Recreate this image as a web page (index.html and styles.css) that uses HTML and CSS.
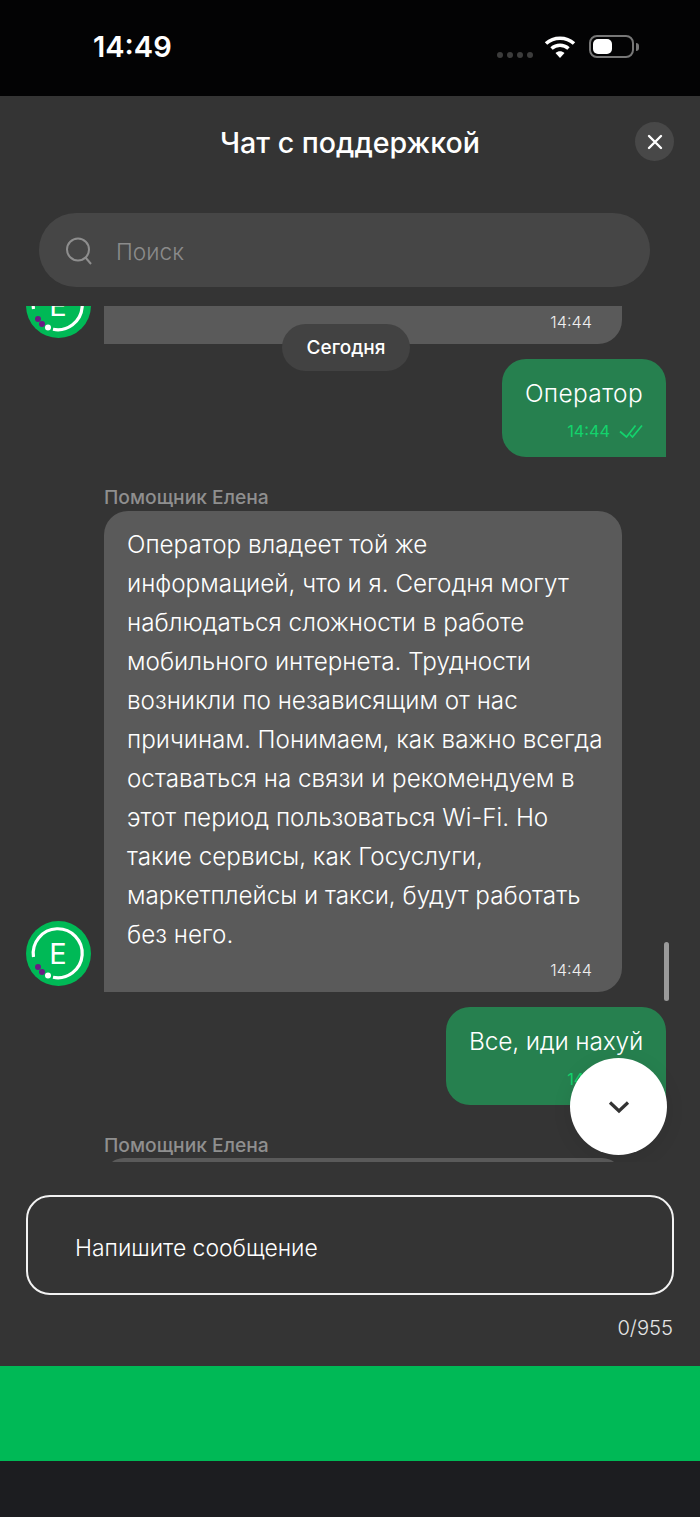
FILE: index.html
```html
<!DOCTYPE html>
<html>
	<head>
		<title>Чат с поддержкой</title>
		<link rel="stylesheet" href="styles.css">
	</head>
	<body>
		<div class="status-bar">
			<span class="clock">14:49</span>
			<div class="status-icons">
				<div class="signal"><i></i><i></i><i></i><i></i></div>
				<svg class="wifi" width="32" height="24" viewBox="0 0 32 24">
					<path d="M2 8.500C9.800 1.500 22.200 1.500 30 8.500" fill="none" stroke="#fff" stroke-width="3.600"/>
					<path d="M7.500 13.500C12.500 9.200 19.500 9.200 24.500 13.500" fill="none" stroke="#fff" stroke-width="3.600"/>
					<path d="M11.500 18C14.300 15.600 17.700 15.600 20.500 18L16 23z" fill="#fff"/>
				</svg>
				<div class="battery"><div class="battery-level"></div></div>
				<div class="battery-cap"></div>
			</div>
		</div>

		<div class="sheet">
			<div class="sheet-header">
				<h1 class="sheet-title">Чат с поддержкой</h1>
				<button class="close-btn">
					<svg width="16" height="16" viewBox="0 0 16 16"><path d="M2 2L14 14M14 2L2 14" stroke="#fff" stroke-width="2.400" stroke-linecap="round"/></svg>
				</button>
			</div>

			<div class="search">
				<svg width="30" height="30" viewBox="0 0 30 30"><circle cx="14" cy="13.500" r="11" fill="none" stroke="#8e8e8e" stroke-width="2"/><path d="M21.500 21.500L27 28" stroke="#8e8e8e" stroke-width="2"/></svg>
				<span class="search-text">Поиск</span>
			</div>

			<div class="chat">
				<div class="chat-list">
					<div class="row">
						<svg class="avatar" viewBox="0 0 65 65"><use href="#logo"/></svg>
						<div class="bubble bubble-clipped"><div class="time">14:44</div></div>
					</div>

					<div class="sent">
						<div class="sent-bubble">
							<div class="sent-text sent-text-short">Оператор</div>
							<div class="sent-meta">
								<span>14:44</span>
								<svg width="24" height="14" viewBox="0 0 24 14"><path d="M1 7.500L7.500 13L16.500 1.500M11 10.500L13.500 13L23 1.500" fill="none" stroke="#13d36c" stroke-width="1.700"/></svg>
							</div>
						</div>
					</div>

					<div class="sender">Помощник Елена</div>
					<div class="row">
						<svg class="avatar" viewBox="0 0 65 65">
							<g id="logo">
								<circle cx="32.500" cy="32.500" r="32.500" fill="#00b956"/>
								<path d="M7.500 36A24.500 24.500 0 1 1 27 56.300" fill="none" stroke="#fff" stroke-width="3.200"/>
								<text x="32" y="43" class="avatar-letter">E</text>
								<circle cx="12" cy="46" r="3" fill="#6a1b83"/>
								<circle cx="16" cy="51" r="3" fill="#6a1b83"/>
								<circle cx="22" cy="54.500" r="3" fill="#fff"/>
							</g>
						</svg>
						<div class="bubble">
							<div class="bubble-text">Оператор владеет той же<br>информацией, что и я. Сегодня могут<br>наблюдаться сложности в работе<br>мобильного интернета. Трудности<br>возникли по независящим от нас<br>причинам. Понимаем, как важно всегда<br>оставаться на связи и рекомендуем в<br>этот период пользоваться Wi-Fi. Но<br>такие сервисы, как Госуслуги,<br>маркетплейсы и такси, будут работать<br>без него.</div>
							<div class="time">14:44</div>
						</div>
					</div>

					<div class="sent">
						<div class="sent-bubble">
							<div class="sent-text sent-text-long">Все, иди нахуй</div>
							<div class="sent-meta">
								<span>14:44</span>
								<svg width="24" height="14" viewBox="0 0 24 14"><path d="M1 7.500L7.500 13L16.500 1.500M11 10.500L13.500 13L23 1.500" fill="none" stroke="#13d36c" stroke-width="1.700"/></svg>
							</div>
						</div>
					</div>

					<div class="sender">Помощник Елена</div>
					<div class="row">
						<div class="avatar-space"></div>
						<div class="bubble bubble-next"></div>
					</div>
				</div>

				<div class="date-pill">Сегодня</div>
				<div class="scrollbar"></div>
				<button class="down-btn">
					<svg width="22" height="14" viewBox="0 0 22 14"><path d="M2 2.500L11 11L20 2.500" fill="none" stroke="#333" stroke-width="3.200"/></svg>
				</button>
			</div>

			<div class="composer">
				<div class="composer-input">Напишите сообщение</div>
				<div class="counter">0/955</div>
			</div>
		</div>

		<div class="green-bar"></div>
		<div class="home-area"></div>
	</body>
</html>
```

FILE: styles.css
```css
* {
	box-sizing: border-box;
}

body {
	margin: 0;
	height: 1517px;
	overflow: hidden;
	display: flex;
	flex-direction: column;
	background-color: #1c1d20;
	color: #fff;
	font-family: Inter, "Noto Sans", sans-serif;
}

button {
	border: 0;
	padding: 0;
	display: flex;
	align-items: center;
	justify-content: center;
}

/* status bar */
.status-bar {
	height: 96px;
	flex: none;
	background: #030304;
	display: flex;
	justify-content: space-between;
	align-items: center;
	padding: 0 61px 3px 93px;
}

.clock {
	font-size: 29px;
	font-weight: 600;
}

.status-icons {
	display: flex;
	align-items: center;
}

.signal {
	display: flex;
	gap: 4px;
	margin: 16px 11px 0 0;
}

.signal i {
	width: 6px;
	height: 6px;
	border-radius: 50%;
	background: #3c3c3c;
}

.wifi {
	margin-right: 13px;
}

.battery {
	width: 45px;
	height: 23px;
	border: 2px solid #777;
	border-radius: 8px;
	padding: 2px;
}

.battery-level {
	width: 19px;
	height: 15px;
	background: #fff;
	border-radius: 5px;
}

.battery-cap {
	width: 3px;
	height: 8px;
	margin-left: 2px;
	background: #777;
	border-radius: 0 3px 3px 0;
}

/* sheet */
.sheet {
	height: 1270px;
	flex: none;
	background: #343434;
	display: flex;
	flex-direction: column;
}

.sheet-header {
	height: 94px;
	flex: none;
	padding-bottom: 2px;
	position: relative;
	display: flex;
	align-items: center;
	justify-content: center;
}

.sheet-title {
	margin: 0;
	font-size: 28.600px;
	font-weight: 500;
}

.close-btn {
	position: absolute;
	top: 26px;
	right: 26px;
	width: 39px;
	height: 39px;
	border-radius: 50%;
	background: #484848;
}

.search {
	height: 74px;
	flex: none;
	margin: 23px 50px 19px 39px;
	padding: 2px 0 0 25px;
	border-radius: 37px;
	background: #464646;
	display: flex;
	align-items: center;
	gap: 22px;
}

.search-text {
	font-size: 22.700px;
	font-weight: 300;
	color: #8b8b8b;
}

/* chat */
.chat {
	height: 856px;
	flex: none;
	position: relative;
	overflow: hidden;
}

.chat-list {
	margin-top: -100px;
	padding: 0 34px 0 26px;
}

.row {
	display: flex;
	align-items: flex-end;
	gap: 13px;
}

.avatar {
	width: 65px;
	height: 65px;
	flex: none;
	margin-bottom: 6px;
}

.avatar-letter {
	font-size: 29px;
	fill: #fff;
	text-anchor: middle;
}

.avatar-space {
	width: 65px;
	flex: none;
}

.bubble {
	width: 518px;
	padding: 14px 24px 12px 23px;
	background: #5a5a5a;
	border-radius: 24px 24px 24px 0;
}

.bubble-clipped {
	height: 138px;
	padding-right: 30px;
	display: flex;
	flex-direction: column;
	justify-content: flex-end;
}

.bubble-next {
	height: 40px;
	margin-top: -1px;
}

.bubble-text {
	font-size: 24.250px;
	font-weight: 300;
	line-height: 39px;
	white-space: nowrap;
	color: #fff;
}

.time {
	margin-top: 6px;
	padding-right: 6px;
	height: 20px;
	font-size: 16.300px;
	font-weight: 300;
	line-height: 20px;
	text-align: right;
	color: #f0f0f0;
}

.bubble-clipped .time {
	padding-right: 0;
}

.sent {
	display: flex;
	justify-content: flex-end;
	margin-top: 15px;
}

.sent-bubble {
	height: 98px;
	padding: 15px 23px 0;
	background: #26804f;
	border-radius: 24px 24px 0 24px;
}

.sent-text {
	font-size: 24.500px;
	font-weight: 300;
	line-height: 39px;
}

.sent-text-short {
	letter-spacing: 0.350px;
}

.sent-text-long {
	letter-spacing: -0.200px;
}

.sent-meta {
	margin-top: 8px;
	display: flex;
	justify-content: flex-end;
	align-items: center;
	gap: 9px;
	height: 20px;
	font-size: 16.300px;
	color: #13d36c;
}

.sender {
	margin: 31px 0 5px 78px;
	height: 18px;
	font-size: 19.250px;
	line-height: 18px;
	font-weight: 500;
	color: #8f8f8f;
}

.date-pill {
	position: absolute;
	top: 18px;
	left: 282px;
	width: 128px;
	height: 47px;
	border-radius: 24px;
	background: #424242;
	display: flex;
	align-items: center;
	justify-content: center;
	font-size: 19px;
	font-weight: 500;
}

.scrollbar {
	position: absolute;
	top: 636px;
	left: 664px;
	width: 5px;
	height: 59px;
	border-radius: 3px;
	background: #9a9a9a;
}

.down-btn {
	position: absolute;
	top: 752px;
	left: 570px;
	width: 97px;
	height: 97px;
	border-radius: 50%;
	background: #fff;
	box-shadow: 0 4px 20px rgba(0, 0, 0, 0.08);
}

/* composer */
.composer {
	padding: 33px 26px 0;
}

.composer-input {
	height: 100px;
	border: 2px solid #f2f2f2;
	border-radius: 24px;
	padding: 5px 0 0 47px;
	display: flex;
	align-items: center;
	font-size: 22.900px;
	font-weight: 300;
	color: #fff;
}

.counter {
	margin: 22px 1px 0 0;
	text-align: right;
	font-size: 20.200px;
	font-weight: 300;
	line-height: 22px;
	color: #e4e4e4;
}

.green-bar {
	height: 95px;
	flex: none;
	background: #00b956;
}

.home-area {
	flex: 1;
	background: #1c1d20;
}
```
